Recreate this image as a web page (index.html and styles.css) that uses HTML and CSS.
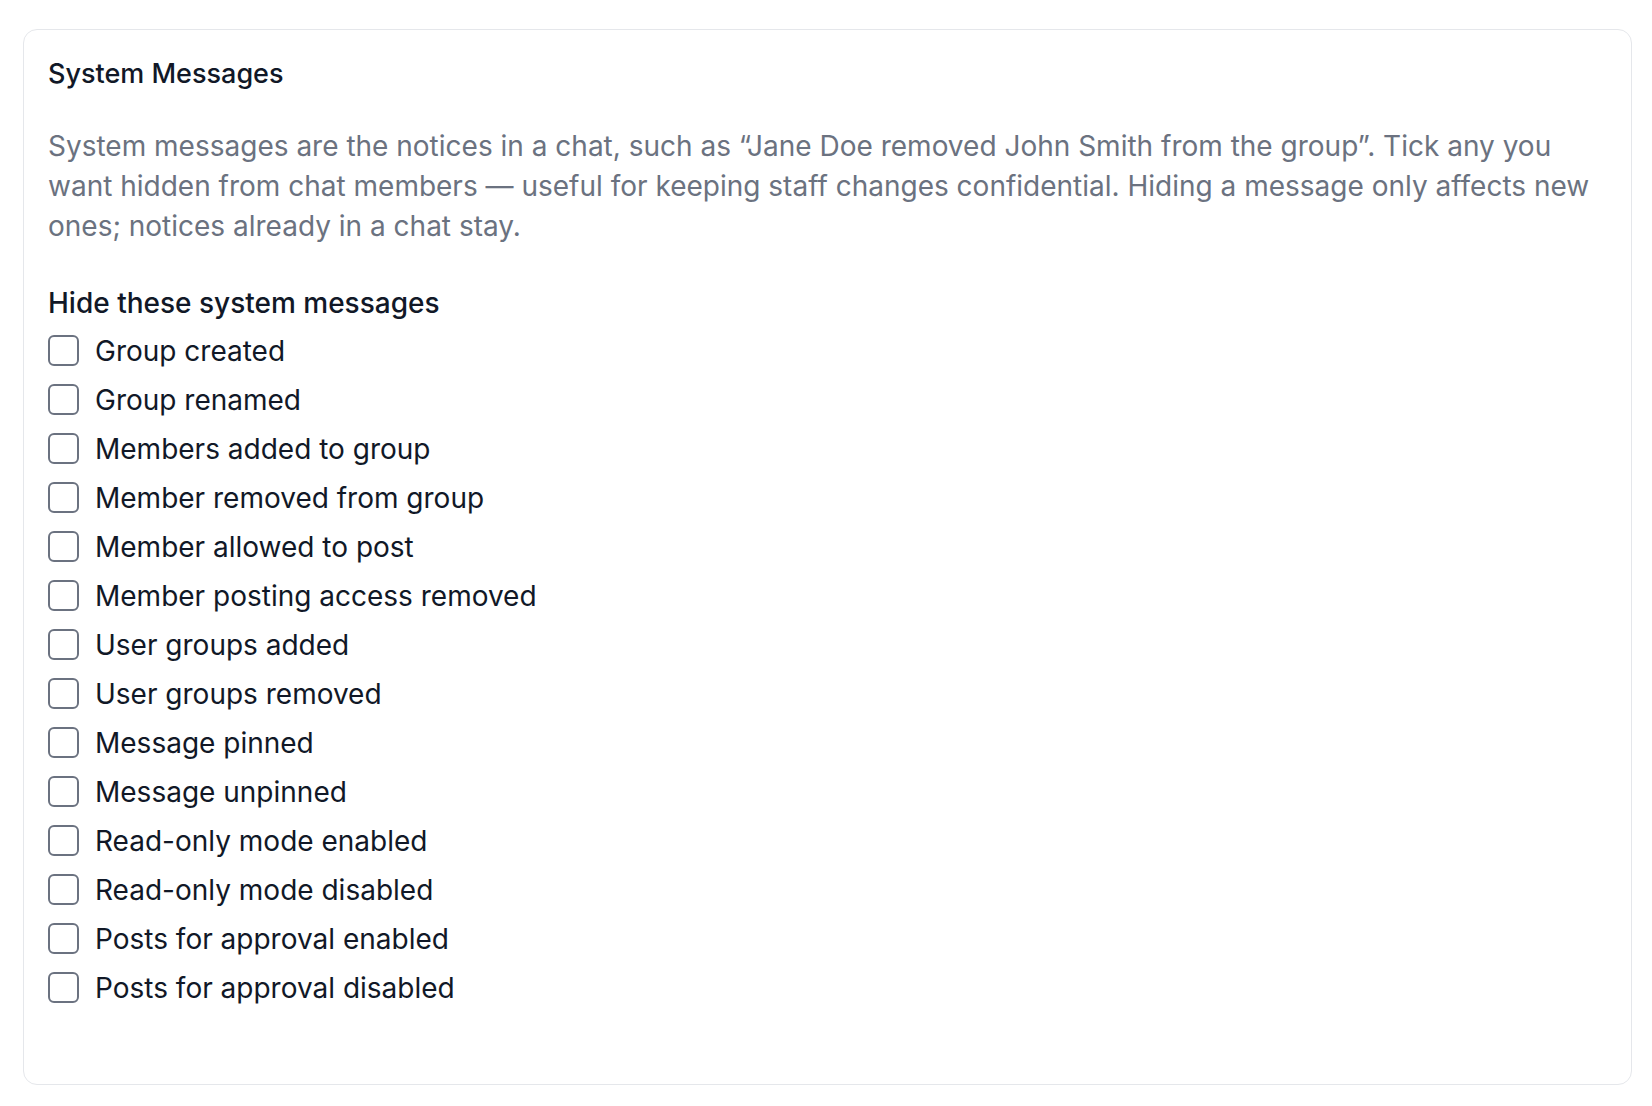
FILE: index.html
```html
<!DOCTYPE html>
<html lang="en">
<head>
    <meta charset="UTF-8">
    <meta name="viewport" content="width=device-width, initial-scale=1.0">
    <title>System Messages</title>
    <link rel="stylesheet" href="styles.css">
</head>
<body>
    <section class="card">
        <h2 class="card-title">System Messages</h2>
        <p class="card-desc">System messages are the notices in a chat, such as “Jane Doe removed John Smith from the group”. Tick any you want hidden from chat members — useful for keeping staff changes confidential. Hiding a message only affects new ones; notices already in a chat stay.</p>
        <fieldset class="hide-list">
            <legend>Hide these system messages</legend>
            <label class="check-row"><input type="checkbox"><span>Group created</span></label>
            <label class="check-row"><input type="checkbox"><span>Group renamed</span></label>
            <label class="check-row"><input type="checkbox"><span>Members added to group</span></label>
            <label class="check-row"><input type="checkbox"><span>Member removed from group</span></label>
            <label class="check-row"><input type="checkbox"><span>Member allowed to post</span></label>
            <label class="check-row"><input type="checkbox"><span>Member posting access removed</span></label>
            <label class="check-row"><input type="checkbox"><span>User groups added</span></label>
            <label class="check-row"><input type="checkbox"><span>User groups removed</span></label>
            <label class="check-row"><input type="checkbox"><span>Message pinned</span></label>
            <label class="check-row"><input type="checkbox"><span>Message unpinned</span></label>
            <label class="check-row"><input type="checkbox"><span>Read-only mode enabled</span></label>
            <label class="check-row"><input type="checkbox"><span>Read-only mode disabled</span></label>
            <label class="check-row"><input type="checkbox"><span>Posts for approval enabled</span></label>
            <label class="check-row"><input type="checkbox"><span>Posts for approval disabled</span></label>
        </fieldset>
    </section>
</body>
</html>
```

FILE: styles.css
```css
body {
    font-family: Inter, "Noto Sans", sans-serif;
    background-color: #fff;
    color: #111827;
    margin: 0;
    padding: 29px 20px 20px 23px;
}
.card {
    border: 1.5px solid #e5e7eb;
    border-radius: 14px;
    padding: 26px 25px 72px 24px;
    height: 1056px;
    box-sizing: border-box;
}
.card-title {
    margin: 0;
    font-size: 27px;
    font-weight: 500;
    line-height: 36px;
    color: #111827;
}
.card-desc {
    margin: 34px 0 0 0;
    font-size: 28px;
    line-height: 40px;
    color: #6b7280;
}
.hide-list {
    border: 0;
    margin: 38px 0 0 0;
    padding: 0;
    display: flex;
    flex-direction: column;
}
.hide-list legend {
    padding: 0;
    font-size: 28px;
    font-weight: 500;
    line-height: 38px;
    color: #111827;
    margin-bottom: 4px;
}
.check-row {
    display: flex;
    align-items: center;
    gap: 16px;
    height: 49px;
    font-size: 28px;
    color: #111827;
}
.check-row input {
    appearance: none;
    margin: 0;
    width: 31px;
    height: 31px;
    border: 2px solid #6b7280;
    border-radius: 6px;
    flex-shrink: 0;
}
```
